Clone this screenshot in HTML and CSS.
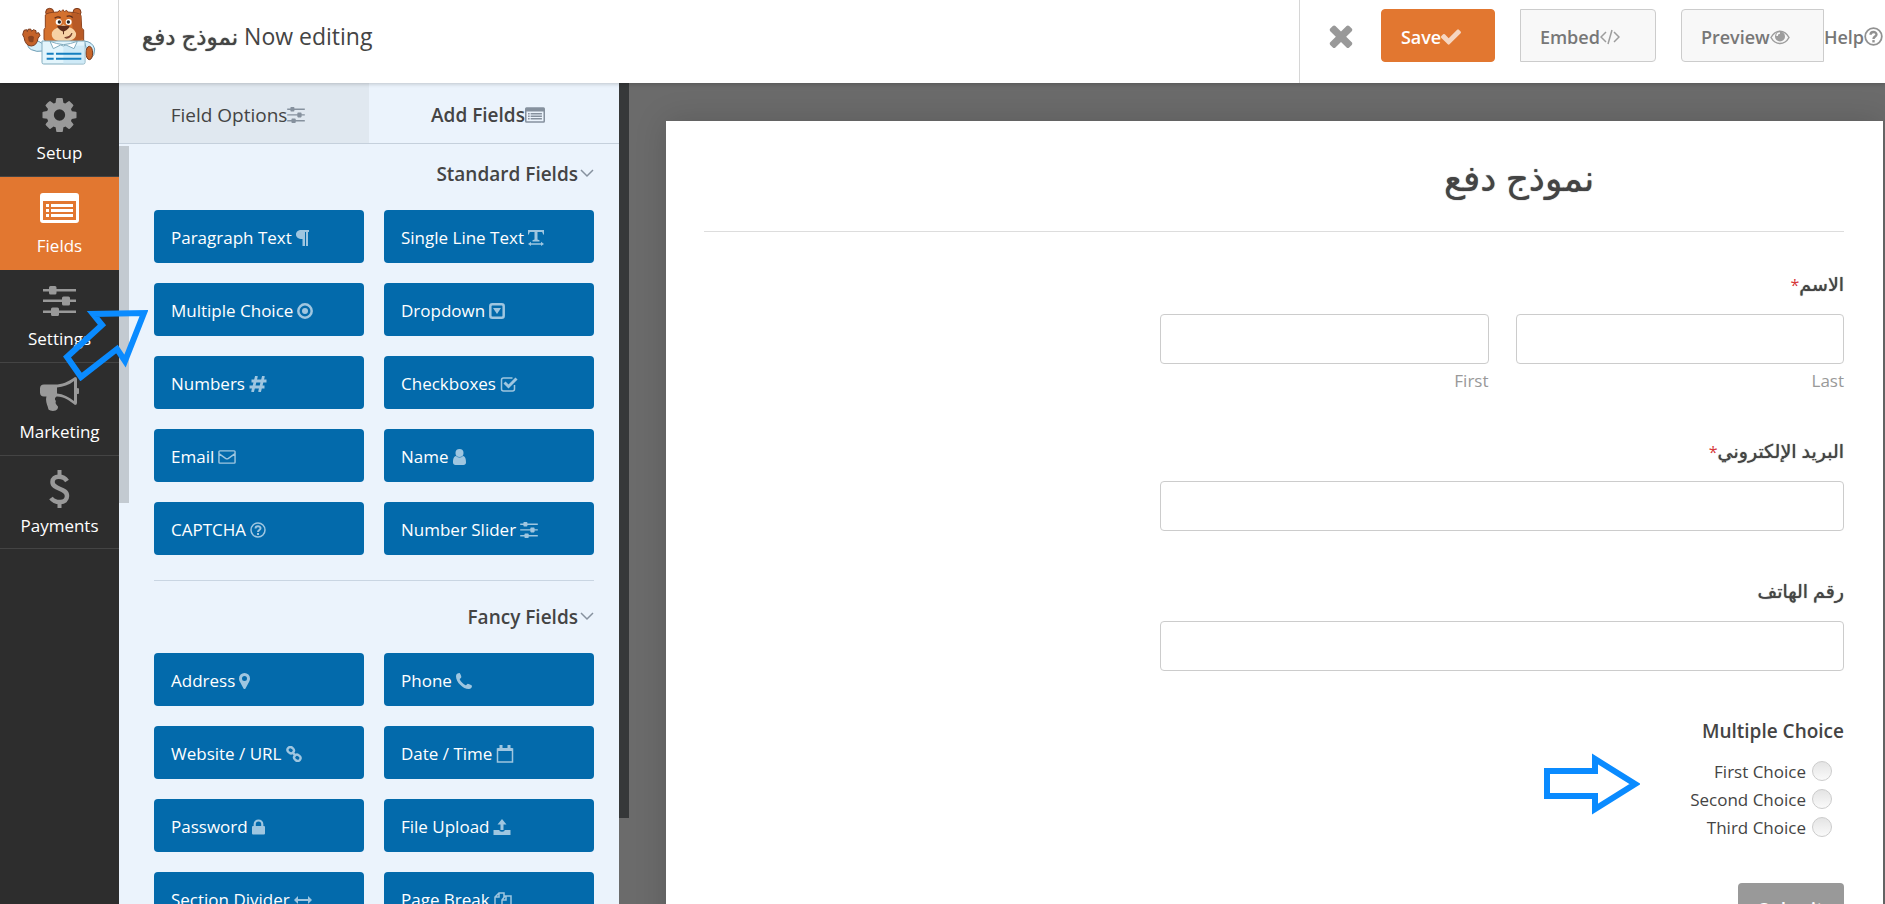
FILE: index.html
```html
<!DOCTYPE html>
<html lang="en">
  <head>
    <meta charset="UTF-8" />
    <meta name="viewport" content="width=device-width, initial-scale=1.0" />
    <title>Form Builder</title>
    <link rel="stylesheet" href="styles.css">
  </head>
  <body>
    <!-- Icon set -->
    <svg class="icon-set" aria-hidden="true">
      <symbol id="cog" viewBox="128 128 1536 1536"><path d="M1152 896q0-106-75-181t-181-75-181 75-75 181 75 181 181 75 181-75 75-181zm512-109v222q0 12-8 23t-20 13l-185 28q-19 54-39 91 35 50 107 138 10 12 10 25t-9 23q-27 37-99 108t-94 71q-12 0-26-9l-138-108q-44 23-91 38-16 136-29 186-7 28-36 28h-222q-14 0-24.5-8.5t-11.5-21.5l-28-184q-49-16-90-37l-141 107q-10 9-25 9-14 0-25-11-126-114-165-168-7-10-7-23 0-12 8-23 15-21 51-66.5t54-70.5q-27-50-41-99l-183-27q-13-2-21-12.5t-8-23.5v-222q0-12 8-23t19-13l186-28q14-46 39-92-40-57-107-138-10-12-10-24 0-10 9-23 26-36 98.5-107.5t94.5-71.5q13 0 26 10l138 107q44-23 91-38 16-136 29-186 7-28 36-28h222q14 0 24.5 8.5t11.5 21.5l28 184q49 16 90 37l142-107q9-9 24-9 13 0 25 10 129 119 165 170 7 8 7 22 0 12-8 23-15 21-51 66.5t-54 70.5q26 50 41 98l183 28q13 2 21 12.5t8 23.5z"/></symbol>
      <symbol id="list" viewBox="0 0 39 30"><path fill-rule="evenodd" d="M3 0h33a3 3 0 0 1 3 3v24a3 3 0 0 1-3 3H3a3 3 0 0 1-3-3V3a3 3 0 0 1 3-3zM3 8v19h33V8zM6 11h3v3H6zM11 11h22v3H11zM6 16h3v3H6zM11 16h22v3H11zM6 21h3v3H6zM11 21h22v3H11z"/></symbol>
      <symbol id="sliders" viewBox="0 0 33 30"><path d="M0 3h6V1.500a1.500 1.500 0 0 1 1.500-1.500h4.500a1.500 1.500 0 0 1 1.500 1.500V3H33v2.500H13.500v1.500a1.500 1.500 0 0 1-1.500 1.500H7.500A1.500 1.500 0 0 1 6 7V5.500H0zM0 13.500h19V12a1.500 1.500 0 0 1 1.500-1.500h5A1.500 1.500 0 0 1 27 12v1.500h6V16h-6v2a1.500 1.500 0 0 1-1.500 1.500h-5A1.500 1.500 0 0 1 19 18v-2H0zM0 24.500h8V23a1.500 1.500 0 0 1 1.500-1.500h5A1.500 1.500 0 0 1 16 23v1.500h17V27H16v1.500a1.500 1.500 0 0 1-1.500 1.500h-5A1.500 1.500 0 0 1 8 28.500V27H0z"/></symbol>
      <symbol id="bullhorn" viewBox="0 0 39 34"><path fill-rule="evenodd" d="M35 0a2 2 0 0 1 2 2v9a3 3 0 0 1 0 6v9a2 2 0 0 1-2 2c-6-5-11-8-18-8.500-2 .5-3 3-1 4.500-1 2 0 3.500 1.500 5 1 1 .5 1.500 0 3-1.500 2.500-7 2.500-9 .5C7.500 28 5 24.500 6.500 19.500H4a4 4 0 0 1-4-4v-4a4 4 0 0 1 4-4h11C22 7.500 28 5 35 0zM34 4c-5 4-11 6-17 6.500v6c6 .5 12 3.500 17 7.500z"/></symbol>
      <symbol id="dollar" viewBox="0 0 20 38"><path d="M8 0h4v6H8zM8 32h4v6H8z"/><path class="line" stroke-width="4.500" d="M17.500 11C14 5.500 3 5 3 12c0 8 14.500 5.500 14.500 14 0 8-12 7.500-16 2"/></symbol>
      <symbol id="times" viewBox="302 238 1188 1316"><path d="M1490 1322q0 40-28 68l-136 136q-28 28-68 28t-68-28l-294-294-294 294q-28 28-68 28t-68-28l-136-136q-28-28-28-68t28-68l294-294-294-294q-28-28-28-68t28-68l136-136q28-28 68-28t68 28l294 294 294-294q28-28 68-28t68 28l136 136q28 28 28 68t-28 68l-294 294 294 294q28 28 28 68z"/></symbol>
      <symbol id="check" viewBox="121 334 1550 1188"><path d="M1671 566q0 40-28 68l-724 724-136 136q-28 28-68 28t-68-28l-136-136-362-362q-28-28-28-68t28-68l136-136q28-28 68-28t68 28l294 295 656-657q28-28 68-28t68 28l136 136q28 28 28 68z"/></symbol>
      <symbol id="code" viewBox="0 0 20 16"><path class="line" d="M6 3 1 8l5 5M14 3l5 5-5 5M12 1 8 15"/></symbol>
      <symbol id="eye" viewBox="0 0 20 16"><path class="line" d="M1 8.500C5.500 0 14.500 0 19 8.500 14.500 16.500 5.500 16.500 1 8.500z"/><circle cx="10" cy="7.500" r="5"/><path class="line faint" d="M7 7a3 3 0 0 1 3-3"/></symbol>
      <symbol id="question" viewBox="0 0 16 16"><circle class="line" cx="8" cy="8" r="7"/><path class="line" stroke-width="2" d="M5.500 6.500C5.500 3.500 10.500 3.500 10.500 6.300 10.500 8 8 8 8 10"/><path d="M7 11h2v2H7z"/></symbol>
      <symbol id="chevron" viewBox="0 0 14 10"><path class="line" d="m1 2 6 6 6-6"/></symbol>
      <symbol id="paragraph" viewBox="0 0 13 16"><path d="M5.500 0H13v2h-1v14h-2V2H9v14H6.500V9C2 9 0 7 0 4.500S2 0 5.500 0z"/></symbol>
      <symbol id="text" viewBox="0 0 16 16"><path d="M0 0h16v4.500h-1c-.3-2-.5-2.500-2-2.500H9.500v7.500l2 .7v1.300h-7v-1.300l2-.7V2H3c-1.500 0-1.700.5-2 2.500H0zM3 11.700v1.500h10v-1.500l3 2.300-3 2v-1.200H3V16l-3-2z"/></symbol>
      <symbol id="dot" viewBox="0 0 16 16"><circle class="line" stroke-width="2.500" cx="8" cy="8" r="6.700"/><circle cx="8" cy="8" r="3"/></symbol>
      <symbol id="caret-square" viewBox="0 0 16 16"><rect class="line" stroke-width="2.500" x="1.300" y="1.300" width="13.400" height="13.400" rx="2"/><path d="M4 5h8l-4 6z"/></symbol>
      <symbol id="hash" viewBox="0 0 17 16"><path class="line" stroke-width="2.800" d="M7 0 3 16M14 0l-4 16M2 5h15M0 11h15"/></symbol>
      <symbol id="check-square" viewBox="0 0 17 16"><path class="line" d="M14 9v4a2 2 0 0 1-2 2H3a2 2 0 0 1-2-2V4a2 2 0 0 1 2-2h9"/><path class="line" stroke-width="3" d="m4 6.500 4 4L16 2.500"/></symbol>
      <symbol id="mail" viewBox="0 0 19 15"><path class="line" d="M2 1h15a1 1 0 0 1 1 1v11a1 1 0 0 1-1 1H2a1 1 0 0 1-1-1V2a1 1 0 0 1 1-1zM1 4l7 5q1.500 1 3 0l7-5"/></symbol>
      <symbol id="user" viewBox="0 0 13 16"><circle cx="6.500" cy="4" r="4"/><path d="M3 7q3.500 3 7 0c2.500.5 3 3.500 3 6.500 0 1.500-1 2.500-2.500 2.500h-8C1 16 0 15 0 13.500 0 10.500.5 7.500 3 7z"/></symbol>
      <symbol id="pin" viewBox="0 0 11 16"><path fill-rule="evenodd" d="M5.500 0A5.500 5.500 0 0 1 11 5.500c0 1.500-.5 2.500-1 3.500l-3.500 6.500q-1 1-2 0L1 9c-.5-1-1-2-1-3.500A5.500 5.500 0 0 1 5.500 0zm0 3a2.500 2.500 0 1 0 0 5 2.500 2.500 0 0 0 0-5z"/></symbol>
      <symbol id="phone" viewBox="0 0 15 15"><path d="M3.500 0c1 1.500 1.500 3 1.500 4-.5 1-1.500 1.200-1.500 2C4.500 8 7 10.500 9 11.500c.8 0 1-1 2-1.500 1 0 3 1 4 2 0 1.500-1 3-3 3C6.500 15 0 8.500 0 3 0 1 1.500 0 3.500 0z"/></symbol>
      <symbol id="link" viewBox="0 0 17 17"><rect class="line" stroke-width="2.500" x="1.500" y="1.500" width="7" height="6" rx="3" transform="rotate(40 5 4.500)"/><rect class="line" stroke-width="2.500" x="8.500" y="9.500" width="7" height="6" rx="3" transform="rotate(40 12 12.500)"/><path class="line" stroke-width="2.500" d="m6.500 6.500 4 4"/></symbol>
      <symbol id="calendar" viewBox="0 0 17 18"><path class="line" d="M1 4h15v13H1z"/><path d="M1 3h15v3H1zM3 0h3v5H3zM11 0h3v5h-3z"/></symbol>
      <symbol id="lock" viewBox="0 0 12 14"><path d="M1 6h10a1 1 0 0 1 1 1v6a1 1 0 0 1-1 1H1a1 1 0 0 1-1-1V7a1 1 0 0 1 1-1z"/><path class="line" stroke-width="2" d="M2.500 7V4.500a3.500 3.500 0 0 1 7 0V7"/></symbol>
      <symbol id="upload" viewBox="0 0 17 16"><path d="M8.500 0 13 5.500h-3V11H7V5.500H4zM0 11h6v1q2.500 1.500 5 0v-1h6v5H0z"/></symbol>
      <symbol id="arrows" viewBox="0 0 18 8"><path d="M0 4l4-4v3h10V0l4 4-4 4V5H4v3z"/></symbol>
      <symbol id="copy" viewBox="0 0 18 18"><path class="line" d="M7 14H1V6l4-4h5v4M5 2v4H1M8 9l3-4h6v12H8zM12 5v4H8"/></symbol>
    </svg>

    <header class="topbar">
      <a class="logo" href="#" aria-label="Dashboard">
        <svg class="bear" viewBox="36 20 222 174">
          <path d="M56 122q-8 18 8 26 16 8 34 4v-22l-14-8z" fill="#d5eef9" stroke="#6d9db5" stroke-width="3"/>
          <path d="M222 122q26 2 32 24 2 18-14 32z" fill="#d5eef9" stroke="#6d9db5" stroke-width="3"/>
          <ellipse cx="238" cy="158" rx="10" ry="20" fill="#c8662a" stroke="#7b3b1e" stroke-width="3"/>
          <path d="M42 90l8-2 2 6 2-7 8-1 3 7 5-5 8 3v8l8-2 4 8-6 9q-3 22-20 23-18 0-22-26l-4-8z" fill="#c5632a" stroke="#7b3b1e" stroke-width="3"/>
          <path d="M54 110q10-8 18 0l-2 14q-8 4-14-2z" fill="#8b431f"/>
          <circle cx="119" cy="36" r="12" fill="#c5632a" stroke="#7b3b1e" stroke-width="3"/>
          <circle cx="201" cy="36" r="12" fill="#c5632a" stroke="#7b3b1e" stroke-width="3"/>
          <path d="M106 44q4-8 38-9l4-5 5 4 6-6 4 6 7-4 3 5q36 2 40 10l2 38 6 6v31q-10 10-61 12-50-2-58-14V88l4-6z" fill="#d4712e" stroke="#8b431f" stroke-width="3"/>
          <path d="M184 37q28 4 28 10l2 38 5 5v26q-14 8-28 8z" fill="#b85a26"/>
          <path d="M126 96c8-14 20-12 34-24 16 12 30 8 38 26 4 18-20 26-37 26s-41-6-35-28z" fill="#f7d2a5"/>
          <path d="M142 76h36q3 8-18 18-20-10-18-18zM159 90h3v12h-3z" fill="#5e2d1b"/>
          <path d="M164 112q16-1 22-14-2 14-16 16z" fill="#8d3026" stroke="#5e2d1b" stroke-width="2"/>
          <circle cx="146" cy="65" r="9" fill="#fff"/><circle cx="176" cy="65" r="9" fill="#fff"/>
          <circle cx="148" cy="65" r="5" fill="#222"/><circle cx="175" cy="65" r="5" fill="#222"/>
          <path d="M134 54q8-8 18-2M170 48q12-4 18 4" fill="none" stroke="#5e2d1b" stroke-width="4"/>
          <path d="M96 122h129v64q0 5-5 5H101q-5 0-5-5z" fill="#e3f5fc" stroke="#82adbf" stroke-width="3"/>
          <path d="M160 136h63v53h-63z" fill="#cfeaf7"/>
          <path d="M120 123q20 8 40 10 22-2 42-10l-10 22-24-11-8 3-8-3-22 11z" fill="#fff" stroke="#82adbf" stroke-width="3"/>
          <path d="M110 157h21v6h-21zM110 172h21v6h-21zM138 157h76v6h-76zM138 172h76v6h-76z" fill="#157fc0"/>
        </svg>
      </a>
      <h1 class="editing"><bdi>نموذج دفع</bdi> <span>Now editing</span></h1>
      <div class="actions">
        <button class="close" aria-label="Close"><svg><use href="#times"/></svg></button>
        <button class="button save">Save<svg><use href="#check"/></svg></button>
        <button class="button embed">Embed<svg><use href="#code"/></svg></button>
        <button class="button preview">Preview<svg><use href="#eye"/></svg></button>
        <a class="help" href="#">Help<svg><use href="#question"/></svg></a>
      </div>
    </header>

    <div class="builder">
      <nav class="sidebar">
        <a href="#"><svg><use href="#cog"/></svg>Setup</a>
        <a href="#" class="active"><svg><use href="#list"/></svg>Fields</a>
        <a href="#"><svg class="small"><use href="#sliders"/></svg>Settings</a>
        <a href="#"><svg><use href="#bullhorn"/></svg>Marketing</a>
        <a href="#"><svg class="tall"><use href="#dollar"/></svg>Payments</a>
      </nav>

      <aside class="panel">
        <div class="tabs">
          <button class="tab">Field Options<svg><use href="#sliders"/></svg></button>
          <button class="tab active">Add Fields<svg class="wide"><use href="#list"/></svg></button>
        </div>
        <div class="panel-body">
          <div class="scrollbar"></div>
          <div class="groups">
            <section class="group">
              <h2>Standard Fields<svg><use href="#chevron"/></svg></h2>
              <div class="field-buttons">
                <button>Paragraph Text<svg class="w13"><use href="#paragraph"/></svg></button>
                <button>Single Line Text<svg><use href="#text"/></svg></button>
                <button>Multiple Choice<svg><use href="#dot"/></svg></button>
                <button>Dropdown<svg><use href="#caret-square"/></svg></button>
                <button>Numbers<svg class="w18"><use href="#hash"/></svg></button>
                <button>Checkboxes<svg class="w18"><use href="#check-square"/></svg></button>
                <button>Email<svg class="w18"><use href="#mail"/></svg></button>
                <button>Name<svg class="w13"><use href="#user"/></svg></button>
                <button>CAPTCHA<svg><use href="#question"/></svg></button>
                <button>Number Slider<svg class="w18"><use href="#sliders"/></svg></button>
              </div>
            </section>
            <section class="group">
              <h2>Fancy Fields<svg><use href="#chevron"/></svg></h2>
              <div class="field-buttons">
                <button>Address<svg class="w11"><use href="#pin"/></svg></button>
                <button>Phone<svg><use href="#phone"/></svg></button>
                <button>Website / URL<svg class="w18"><use href="#link"/></svg></button>
                <button>Date / Time<svg class="w18 h18"><use href="#calendar"/></svg></button>
                <button>Password<svg class="w13"><use href="#lock"/></svg></button>
                <button>File Upload<svg class="w18"><use href="#upload"/></svg></button>
                <button>Section Divider<svg class="w18"><use href="#arrows"/></svg></button>
                <button>Page Break<svg class="w18 h18"><use href="#copy"/></svg></button>
              </div>
            </section>
          </div>
        </div>
      </aside>

      <main class="canvas">
        <div class="canvas-scrollbar"></div>
        <form class="form" dir="rtl">
          <h2 class="form-title"><span>نموذج دفع</span></h2>

          <fieldset class="form-field">
            <legend lang="ar">الاسم<span class="required">*</span></legend>
            <div class="name-row">
              <div>
                <input type="text" id="last-name">
                <label for="last-name">Last</label>
              </div>
              <div>
                <input type="text" id="first-name">
                <label for="first-name">First</label>
              </div>
            </div>
          </fieldset>

          <div class="form-field">
            <label class="title" lang="ar" for="email">البريد الإلكتروني<span class="required">*</span></label>
            <input type="email" id="email">
          </div>

          <div class="form-field">
            <label class="title" lang="ar" for="phone-number">رقم الهاتف</label>
            <input type="tel" id="phone-number">
          </div>

          <fieldset class="form-field choices">
            <legend>Multiple Choice</legend>
            <label><input type="radio" name="choice">First Choice</label>
            <label><input type="radio" name="choice">Second Choice</label>
            <label><input type="radio" name="choice">Third Choice</label>
          </fieldset>

          <button type="button" class="submit">Submit</button>
        </form>
      </main>

      <!-- Pointer arrows -->
      <svg class="pointer pointer-field" viewBox="0 0 86 72"><path d="m82 4-19 48-8-12L19 68 5 48l35-32-9-11z"/></svg>
      <svg class="pointer pointer-choice" viewBox="0 0 96 62"><path d="M3 18h48V6l40 25-40 25V43H3z"/></svg>
    </div>
  </body>
</html>
```
FILE: styles.css
```css
* {
  box-sizing: border-box;
}

body {
  margin: 0;
  height: 100vh;
  overflow: hidden;
  display: flex;
  flex-direction: column;
  font-family: "Open Sans", "Noto Sans", "DejaVu Sans", sans-serif;
  font-size: 17px;
  color: #444;
  background-color: #fff;
}

a {
  text-decoration: none;
}

button {
  font: inherit;
  cursor: pointer;
}

svg {
  fill: currentColor;
  flex-shrink: 0;
}

symbol {
  stroke-width: 1.5;
}

.line {
  fill: none;
  stroke: currentColor;
}

.faint {
  stroke: #fff;
}

.icon-set {
  position: absolute;
  width: 0;
  height: 0;
}

/* Top bar */
.topbar {
  display: flex;
  height: 83px;
  flex-shrink: 0;
  position: relative;
  z-index: 2;
  background-color: #fff;
  box-shadow: 0 1px 4px rgba(0, 0, 0, 0.2);
}

.logo {
  width: 119px;
  padding: 7px 0 0 22px;
  border-right: 1px solid #d6d6d6;
}

.bear {
  width: 74px;
  height: 58px;
}

.editing {
  margin: 0;
  padding: 0 23px;
  font-size: 23px;
  font-weight: 400;
  line-height: 72px;
}

.editing bdi,
.form-title,
.form-field [lang="ar"] {
  text-shadow: 0 0 1px #444;
}

.actions {
  display: flex;
  align-items: flex-start;
  margin-left: auto;
  padding: 9px 2px 0 29px;
  border-left: 1px solid #d6d6d6;
}

.close {
  width: 24px;
  height: 53px;
  padding: 0;
  margin-right: 28px;
  border: 0;
  background: none;
  color: #999;
}

.close svg {
  display: block;
  width: 24px;
  height: 25px;
}

.button {
  display: flex;
  align-items: center;
  height: 53px;
  padding: 2px 0 0 19px;
  margin-right: 25px;
  border: 1px solid #ccc;
  border-radius: 4px;
  background-color: #f8f8f8;
  color: #777;
  font-size: 18px;
  font-weight: 600;
}

.button svg {
  width: 20px;
  height: 16px;
  opacity: 0.7;
}

.save {
  width: 114px;
  border-color: #e27730;
  background-color: #e27730;
  color: #fff;
}

.embed {
  width: 136px;
  border-radius: 0 4px 4px 0;
}

.preview {
  width: 143px;
  margin-right: 0;
  border-radius: 4px 0 0 4px;
}

.help {
  display: flex;
  align-items: center;
  height: 53px;
  padding-top: 2px;
  color: #777;
  font-size: 18px;
  font-weight: 600;
}

.help svg {
  width: 19px;
  height: 19px;
  opacity: 0.8;
}

/* Sidebar */
.builder {
  display: flex;
  flex: 1;
  min-height: 0;
  position: relative;
}

.sidebar {
  width: 119px;
  flex-shrink: 0;
  padding-top: 1px;
  background-color: #2d2d2d;
}

.sidebar a {
  display: flex;
  flex-direction: column;
  align-items: center;
  height: 93px;
  padding-top: 14px;
  gap: 9px;
  border-bottom: 1px solid #444;
  line-height: 24px;
  color: #fff;
}

.sidebar svg {
  width: 39px;
  height: 34px;
  color: #999;
}

.sidebar .small {
  width: 33px;
}

.sidebar .tall {
  height: 38px;
  margin-bottom: -3px;
}

.sidebar .active {
  border-color: #e27730;
  background-color: #e27730;
}

.sidebar .active svg {
  color: #fff;
}

/* Fields panel */
.panel {
  display: flex;
  flex-direction: column;
  width: 500px;
  flex-shrink: 0;
  background-color: #ebf3fc;
}

.tabs {
  display: flex;
  height: 61px;
  flex-shrink: 0;
  border-bottom: 1px solid #c5d0dc;
}

.tab {
  display: flex;
  flex: 1;
  align-items: center;
  justify-content: center;
  padding: 4px 12px 0 0;
  border: 0;
  background-color: #e0e8f0;
  color: #444;
  font-size: 19px;
}

.tab.active {
  background-color: #ebf3fc;
  font-weight: 600;
}

.tab svg {
  width: 18px;
  height: 16px;
  color: #86919e;
}

.tab .wide {
  width: 20px;
}

.panel-body {
  display: flex;
  flex: 1;
  min-height: 0;
  overflow: hidden;
  padding-right: 25px;
}

.scrollbar {
  width: 10px;
  height: 47%;
  margin-top: 2px;
  background-color: #c3cad1;
}

.groups {
  flex: 1;
  padding-left: 25px;
}

.group {
  padding: 16px 0 25px;
  border-bottom: 1px solid #c9d5e2;
}

.group + .group {
  padding-top: 22px;
}

.group h2 {
  display: flex;
  justify-content: flex-end;
  gap: 2px;
  margin: 0 0 22px;
  font-size: 19px;
  font-weight: 600;
  line-height: 28px;
}

.group h2 svg {
  width: 14px;
  height: 10px;
  margin-top: 8px;
  color: #86919e;
}

.field-buttons {
  display: grid;
  grid-template-columns: 1fr 1fr;
  gap: 20px;
}

.field-buttons button {
  display: flex;
  align-items: center;
  gap: 4px;
  height: 53px;
  padding: 2px 17px 0;
  border: 0;
  border-radius: 4px;
  background-color: #036aab;
  color: #fff;
}

.field-buttons svg {
  width: 16px;
  height: 16px;
  color: #9fc6e0;
}

.field-buttons .w11 {
  width: 11px;
}

.field-buttons .w13 {
  width: 13px;
}

.field-buttons .w18 {
  width: 18px;
}

.field-buttons .h18 {
  height: 18px;
}

/* Form preview */
.canvas {
  display: flex;
  align-items: flex-start;
  flex: 1;
  padding-right: 2px;
  background-color: #6b6b6b;
}

.canvas-scrollbar {
  width: 10px;
  height: 735px;
  margin-right: 37px;
  background-color: #363839;
}

.form {
  flex: 1;
  margin-top: 38px;
  padding: 33px 39px 38px 38px;
  background-color: #fff;
  box-shadow: 0 0 30px rgba(0, 0, 0, 0.15);
}

.form-title {
  margin: 0 0 40px;
  padding-bottom: 29px;
  border-bottom: 1px solid #ddd;
  font-size: 36px;
  font-weight: 400;
  line-height: 48px;
}

.form-title span {
  display: block;
  width: 57%;
  text-align: center;
}

.form-field {
  width: 60%;
  min-width: 0;
  margin: 0 0 48px;
  padding: 0;
  border: 0;
}

.form-field legend,
.form-field .title {
  display: block;
  padding: 0;
  margin-bottom: 18px;
  font-size: 19px;
  font-weight: 600;
  line-height: 24px;
}

.form-field [lang="ar"] {
  font-weight: 400;
}

.required {
  color: #d63638;
  font-size: 16px;
  font-weight: 400;
  line-height: 1;
  text-shadow: none;
}

.form-field input {
  display: block;
  width: 100%;
  height: 50px;
  border: 1px solid #ccc;
  border-radius: 4px;
  background-color: #fff;
}

.name-row {
  display: grid;
  grid-template-columns: 1fr 1fr;
  gap: 27px;
}

.name-row label {
  display: block;
  margin-top: 6px;
  line-height: 21px;
  color: #999;
}

.form-field.choices {
  margin-bottom: 42px;
}

.choices legend {
  margin-bottom: 14px;
}

.choices label {
  display: flex;
  align-items: center;
  gap: 6px;
  height: 28px;
  padding-right: 12px;
}

.form-field input[type="radio"] {
  appearance: none;
  width: 20px;
  height: 20px;
  margin: 0;
  border-radius: 50%;
  background-image: linear-gradient(#e4e4e4, #fafafa);
}

.submit {
  width: 106px;
  height: 53px;
  border: 0;
  border-radius: 4px;
  background-color: #999;
  color: #fff;
  font-size: 19px;
  font-weight: 600;
}

/* Pointer arrows */
.pointer {
  position: absolute;
  fill: none;
  stroke: #0a8bff;
  stroke-width: 6;
}

.pointer-field {
  left: 62px;
  top: 226px;
  width: 86px;
  height: 72px;
}

.pointer-choice {
  right: 245px;
  top: 670px;
  width: 96px;
  height: 62px;
}
```
